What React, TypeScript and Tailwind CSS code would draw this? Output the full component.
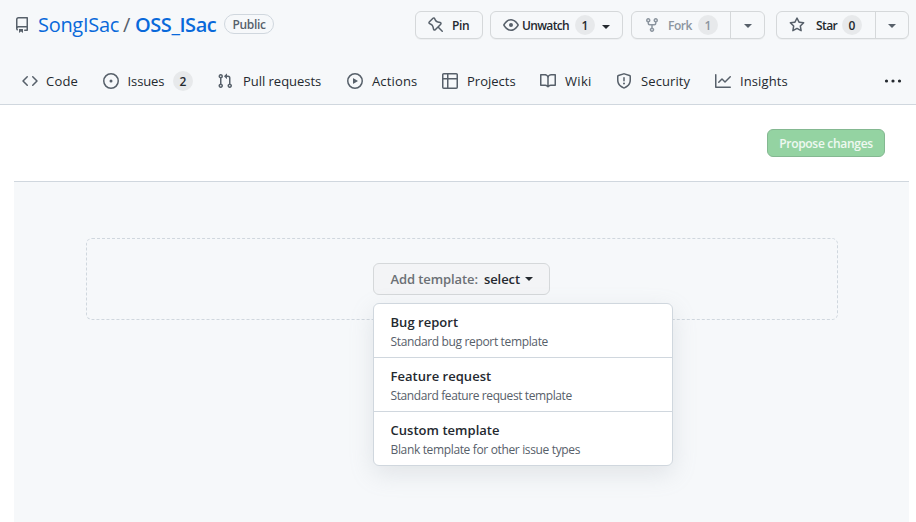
import React from "react";

const paths = {
  repo: "M2 2.5A2.5 2.5 0 014.5 0h8.75a.75.75 0 01.75.75v12.5a.75.75 0 01-.75.75h-2.5a.75.75 0 110-1.5h1.75v-2h-8a1 1 0 00-.714 1.7.75.75 0 01-1.072 1.05A2.495 2.495 0 012 11.5v-9zm10.5-1V9h-8c-.356 0-.694.074-1 .208V2.5a1 1 0 011-1h8zM5 12.25v3.25a.25.25 0 00.4.2l1.45-1.087a.25.25 0 01.3 0L8.6 15.7a.25.25 0 00.4-.2v-3.25a.25.25 0 00-.25-.25h-3.5a.25.25 0 00-.25.25z",
  pin: "M4.456.734a1.75 1.75 0 012.826.504l.613 1.327a3.081 3.081 0 002.084 1.707l2.454.584c1.332.317 1.8 1.972.832 2.94L11.06 10l3.72 3.72a.75.75 0 11-1.061 1.06L10 11.06l-2.204 2.205c-.968.968-2.623.5-2.94-.832l-.584-2.454a3.081 3.081 0 00-1.707-2.084l-1.327-.613a1.75 1.75 0 01-.504-2.826L4.456.734zM5.92 1.866a.25.25 0 00-.404-.072L1.794 5.516a.25.25 0 00.072.404l1.328.613A4.582 4.582 0 015.73 9.63l.584 2.454a.25.25 0 00.42.12l5.47-5.47a.25.25 0 00-.12-.42L9.63 5.73a4.581 4.581 0 01-3.098-2.537L5.92 1.866z",
  eye: "M1.679 7.932c.412-.621 1.242-1.75 2.366-2.717C5.175 4.242 6.527 3.5 8 3.5c1.473 0 2.824.742 3.955 1.715 1.124.967 1.954 2.096 2.366 2.717a.119.119 0 010 .136c-.412.621-1.242 1.75-2.366 2.717C10.825 11.758 9.473 12.5 8 12.5c-1.473 0-2.824-.742-3.955-1.715C2.92 9.818 2.09 8.69 1.679 8.068a.119.119 0 010-.136zM8 2c-1.981 0-3.67.992-4.933 2.078C1.797 5.169.88 6.423.43 7.1a1.619 1.619 0 000 1.798c.45.678 1.367 1.932 2.637 3.024C4.329 13.008 6.019 14 8 14c1.981 0 3.67-.992 4.933-2.078 1.27-1.091 2.187-2.345 2.637-3.023a1.619 1.619 0 000-1.798c-.45-.678-1.367-1.932-2.637-3.023C11.671 2.992 9.981 2 8 2zm0 8a2 2 0 100-4 2 2 0 000 4z",
  fork: "M5 3.25a.75.75 0 11-1.5 0 .75.75 0 011.5 0zm0 2.122a2.25 2.25 0 10-1.5 0v.878A2.25 2.25 0 005.75 8.5h1.5v2.128a2.251 2.251 0 101.5 0V8.5h1.5a2.25 2.25 0 002.25-2.25v-.878a2.25 2.25 0 10-1.5 0v.878a.75.75 0 01-.75.75h-4.5A.75.75 0 015 6.25v-.878zm3.75 7.378a.75.75 0 11-1.5 0 .75.75 0 011.5 0zm3-8.75a.75.75 0 100-1.5.75.75 0 000 1.5z",
  star: "M8 .25a.75.75 0 01.673.418l1.882 3.815 4.21.612a.75.75 0 01.416 1.279l-3.046 2.97.719 4.192a.75.75 0 01-1.088.791L8 12.347l-3.766 1.98a.75.75 0 01-1.088-.79l.72-4.194L.818 6.374a.75.75 0 01.416-1.28l4.21-.611L7.327.668A.75.75 0 018 .25zm0 2.445L6.615 5.5a.75.75 0 01-.564.41l-3.097.45 2.24 2.184a.75.75 0 01.216.664l-.528 3.084 2.769-1.456a.75.75 0 01.698 0l2.77 1.456-.53-3.084a.75.75 0 01.216-.664l2.24-2.183-3.096-.45a.75.75 0 01-.564-.41L8 2.694v.001z",
  code: "M4.72 3.22a.75.75 0 011.06 1.06L2.06 8l3.72 3.72a.75.75 0 11-1.06 1.06L.47 8.53a.75.75 0 010-1.06l4.25-4.25zm6.56 0a.75.75 0 10-1.06 1.06L13.94 8l-3.72 3.72a.75.75 0 101.06 1.06l4.25-4.25a.75.75 0 000-1.06l-4.25-4.25z",
  issue: "M8 9.5a1.5 1.5 0 100-3 1.5 1.5 0 000 3zM8 0a8 8 0 100 16A8 8 0 008 0zM1.5 8a6.5 6.5 0 1113 0 6.5 6.5 0 01-13 0z",
  pull: "M7.177 3.073L9.573.677A.25.25 0 0110 .854v4.792a.25.25 0 01-.427.177L7.177 3.427a.25.25 0 010-.354zM3.75 2.5a.75.75 0 100 1.5.75.75 0 000-1.5zm-2.25.75a2.25 2.25 0 113 2.122v5.256a2.251 2.251 0 11-1.5 0V5.372A2.25 2.25 0 011.5 3.25zM11 2.5h-1V4h1a1 1 0 011 1v5.628a2.251 2.251 0 101.5 0V5A2.5 2.5 0 0011 2.5zm1 10.25a.75.75 0 111.5 0 .75.75 0 01-1.5 0zM3.75 12a.75.75 0 100 1.5.75.75 0 000-1.5z",
  play: "M1.5 8a6.5 6.5 0 1113 0 6.5 6.5 0 01-13 0zM8 0a8 8 0 100 16A8 8 0 008 0zM6.379 5.227A.25.25 0 006 5.442v5.117a.25.25 0 00.379.214l4.264-2.559a.25.25 0 000-.428L6.379 5.227z",
  table: "M0 1.75C0 .784.784 0 1.75 0h12.5C15.216 0 16 .784 16 1.75v12.5A1.75 1.75 0 0114.25 16H1.75A1.75 1.75 0 010 14.25V1.75zM6.5 6.5v8h7.75a.25.25 0 00.25-.25V6.5h-8zm8-1.5V1.75a.25.25 0 00-.25-.25H6.5V5h8zm-13 1.5v7.75c0 .138.112.25.25.25H5v-8H1.5zM5 5V1.5H1.75a.25.25 0 00-.25.25V5H5z",
  book: "M0 1.75A.75.75 0 01.75 1h4.253c1.227 0 2.317.59 3 1.501A3.744 3.744 0 0111.006 1h4.245a.75.75 0 01.75.75v10.5a.75.75 0 01-.75.75h-4.507a2.25 2.25 0 00-1.591.659l-.622.621a.75.75 0 01-1.06 0l-.622-.621A2.25 2.25 0 005.258 13H.75a.75.75 0 01-.75-.75V1.75zm8.755 3a2.25 2.25 0 012.25-2.25H14.5v9h-3.757c-.71 0-1.4.201-1.992.572l.004-7.322zm-1.504 7.324l.004-5.073-.002-2.253A2.25 2.25 0 005.003 2.5H1.5v9h3.757a3.75 3.75 0 011.994.574z",
  shield: "M7.467.133a1.75 1.75 0 011.066 0l5.25 1.68A1.75 1.75 0 0115 3.48V7c0 1.566-.32 3.182-1.303 4.682-.983 1.498-2.585 2.813-5.032 3.855a1.7 1.7 0 01-1.33 0c-2.447-1.042-4.049-2.357-5.032-3.855C1.32 10.182 1 8.566 1 7V3.48a1.75 1.75 0 011.217-1.667l5.25-1.68zm.61 1.429a.25.25 0 00-.153 0l-5.25 1.68a.25.25 0 00-.174.238V7c0 1.358.275 2.666 1.057 3.86.784 1.194 2.121 2.34 4.366 3.297a.2.2 0 00.154 0c2.245-.956 3.582-2.104 4.366-3.298C13.225 9.666 13.5 8.36 13.5 7V3.48a.25.25 0 00-.174-.237l-5.25-1.68zM9 10.5a1 1 0 11-2 0 1 1 0 012 0zm-.25-5.75a.75.75 0 10-1.5 0v3a.75.75 0 001.5 0v-3z",
  graph: "M1.5 1.75a.75.75 0 00-1.5 0v12.5c0 .414.336.75.75.75h14.5a.75.75 0 000-1.5H1.5V1.75zm14.28 2.53a.75.75 0 00-1.06-1.06L10 7.94 7.53 5.47a.75.75 0 00-1.06 0L3.22 8.72a.75.75 0 001.06 1.06L7 7.06l2.47 2.47a.75.75 0 001.06 0l5.25-5.25z",
  dots: "M1.5 6.4a1.6 1.6 0 100 3.2 1.6 1.6 0 000-3.2zM8 6.4a1.6 1.6 0 100 3.2 1.6 1.6 0 000-3.2zM14.5 6.4a1.6 1.6 0 100 3.2 1.6 1.6 0 000-3.2z",
};

type IconName = keyof typeof paths;

function Icon({ name, className = "text-[#57606a]" }: { name: IconName; className?: string }) {
  return (
    <svg viewBox="0 0 16 16" width="16" height="16" fill="currentColor" fillRule="evenodd" className={`shrink-0 overflow-visible ${className}`}>
      <path d={paths[name]} />
    </svg>
  );
}

function Caret({ className = "" }: { className?: string }) {
  return (
    <svg viewBox="0 0 8 4" width="8" height="4" fill="currentColor" className={`shrink-0 ${className}`}>
      <path d="M0 0h8L4 4z" />
    </svg>
  );
}

function Count({ value, className = "" }: { value: string; className?: string }) {
  return (
    <span className={`flex h-5 w-5 shrink-0 items-center justify-center rounded-full bg-[#e7e9eb] pt-px text-xs font-semibold ${className}`}>
      {value}
    </span>
  );
}

const tabs: { icon: IconName; label: string; slot: string; text: string; count?: string }[] = [
  { icon: "code", label: "Code", slot: "w-[81px]", text: "ml-2 tracking-[0.2px]" },
  { icon: "issue", label: "Issues", slot: "w-[114px]", text: "ml-[8.5px] w-[45.5px] tracking-[-0.1px]", count: "2" },
  { icon: "pull", label: "Pull requests", slot: "w-[130px]", text: "ml-[10px] tracking-[-0.03px]" },
  { icon: "play", label: "Actions", slot: "w-[95px]", text: "ml-[9px] tracking-[0.15px]" },
  { icon: "table", label: "Projects", slot: "w-[98px]", text: "ml-[9px] tracking-[0px]" },
  { icon: "book", label: "Wiki", slot: "w-[76px]", text: "ml-[9px] tracking-[0.3px]" },
  { icon: "shield", label: "Security", slot: "w-[99px]", text: "ml-[9px] tracking-[0.1px]" },
  { icon: "graph", label: "Insights", slot: "w-[170px]", text: "ml-[9px] tracking-[0.1px]" },
];

const templates = [
  { title: "Bug report", text: "Standard bug report template", fit: "tracking-[-0.35px]" },
  { title: "Feature request", text: "Standard feature request template", fit: "tracking-[-0.4px]" },
  { title: "Custom template", text: "Blank template for other issue types", fit: "tracking-[-0.35px]" },
];

const button = "flex h-7 items-center rounded-md border border-[#d5d8da] bg-[#f6f8fa] text-left text-xs font-semibold shadow-[0_1px_0_rgba(27,31,36,0.04)]";

export default function App() {
  return (
    <div className="h-[522px] w-[916px] overflow-hidden bg-white font-['Open_Sans','Noto_Sans',sans-serif] whitespace-nowrap text-[#24292f]">
      <header className="flex h-[105px] flex-col border-b border-[#d0d7de] bg-[#f6f8fa]">
        <div className="flex h-[50px] items-center pl-[14px]">
          <Icon name="repo" className="mb-px text-[#57606a]" />
          <div className="ml-2 flex h-[30px] items-center text-xl leading-[30px] text-[#0969da]">
            <a className="w-[85px] tracking-[-0.3px]">SongISac</a>
            <span className="w-[12px] text-[#57606a]">/</span>
            <a className="w-[89px] font-semibold tracking-[-0.45px]">OSS_ISac</a>
          </div>
          <span className="mb-[2px] flex h-5 w-[50px] items-center justify-center rounded-full border border-[#d0d7de] pt-0.5 text-xs font-semibold tracking-[-0.35px] text-[#57606a]">Public</span>
          <div className="ml-[141px] flex">
            <button className={`${button} w-[68px] pl-3`}>
              <Icon name="pin" />
              <span className="mt-px ml-2 tracking-[-0.4px]">Pin</span>
            </button>
            <button className={`${button} ml-[7px] w-[133px] pl-3`}>
              <Icon name="eye" />
              <span className="mt-px ml-[3px] w-[53px] tracking-[-0.65px]">Unwatch</span>
              <Count value="1" />
              <Caret className="mt-1 ml-[7px]" />
            </button>
            <div className={`${button} ml-2 w-[134px] pl-3 text-[#8c959f]`}>
              <Icon name="fork" className="text-[#8c959f]" />
              <span className="mt-px ml-[8px] w-[30px] tracking-[-0.5px]">Fork</span>
              <Count value="1" />
              <span className="ml-3 flex h-[26px] flex-1 items-center justify-center border-l border-[#d5d8da] text-[#57606a]"><Caret className="mt-0.5" /></span>
            </div>
            <div className={`${button} ml-[11px] w-[133px] pl-3`}>
              <Icon name="star" />
              <span className="mt-px ml-[11px] w-[26px] tracking-[-0.6px]">Star</span>
              <Count value="0" />
              <span className="ml-[13px] flex h-[26px] flex-1 items-center justify-center border-l border-[#d5d8da] text-[#57606a]"><Caret className="mt-0.5" /></span>
            </div>
          </div>
        </div>
        <nav className="mt-2 flex h-[46px] shrink-0 items-center pl-[22px]">
          {tabs.map((tab) => (
            <a key={tab.label} className={`flex shrink-0 items-center text-[13px] ${tab.slot}`}>
              <Icon name={tab.icon} />
              <span className={`mt-px ${tab.text}`}>{tab.label}</span>
              {tab.count && <Count value={tab.count} />}
            </a>
          ))}
          <Icon name="dots" className="mb-px text-[#24292f]" />
        </nav>
      </header>
      <div className="flex h-[76px] items-center justify-end pr-[31px]">
        <button className="flex h-7 w-[118px] items-center justify-center rounded-md border border-[#84b891] bg-[#94d3a2] pt-px text-xs font-semibold tracking-[-0.3px] text-white/85">Propose changes</button>
      </div>
      <main className="mr-[7px] ml-[14px] h-[341px] border-t border-[#d0d7de] bg-[#f6f8fa] px-[72px] pt-14">
        <section className="h-[82px] w-[752px] rounded-md border border-dashed border-[#d0d7de] pt-6 pl-[286px]">
          <div className="relative w-[177px]">
            <button className="flex h-8 w-[177px] items-center rounded-md border border-[#d5d8da] bg-[#f3f4f6] pl-[16.5px] text-left text-[13px] font-semibold">
              <span className="mt-px w-[93.5px] tracking-[-0.1px] text-[#6b7075]">Add template:</span>
              <span className="mt-px w-[41px] tracking-[-0.1px]">select</span>
              <Caret />
            </button>
            <div className="absolute top-10 left-0 z-10 w-[300px] overflow-hidden rounded-md border border-[#d0d7de] bg-white shadow-[0_8px_24px_rgba(140,149,159,0.2)]">
              {templates.map((item) => (
                <div key={item.title} className="h-[54px] border-b border-[#d0d7de] pt-2 pl-[16.5px] last:h-[53px] last:border-b-0">
                  <div className="h-5 text-[13px] leading-5 font-semibold tracking-[0.03px]">{item.title}</div>
                  <div className={`text-xs leading-[20px] text-[#57606a] ${item.fit}`}>{item.text}</div>
                </div>
              ))}
            </div>
          </div>
        </section>
      </main>
    </div>
  );
}
